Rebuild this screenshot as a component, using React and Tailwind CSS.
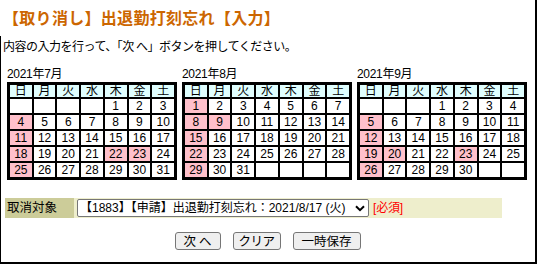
import React from "react";

const heads = ["日", "月", "火", "水", "木", "金", "土"];

function Cal({ label, start, days, pink }) {
  const cells = [];
  for (let i = 0; i < start; i++) cells.push(null);
  for (let d = 1; d <= days; d++) cells.push(d);
  while (cells.length % 7) cells.push(null);
  return (
    <div className="flex flex-col w-[170px]">
      <div className="text-[12px] leading-[15px] h-[15px] tracking-[-0.3px]">{label}</div>
      <div className="grid grid-cols-7 gap-[2px] bg-black border-[3px] border-black">
        {heads.map((h) => (
          <div key={h} className="bg-[#e0ffff] h-[12px] leading-[12px] text-[12px] text-center">
            {h}
          </div>
        ))}
        {cells.map((d, i) => (
          <div
            key={i}
            className={
              d && pink.includes(d)
                ? "bg-[#ffc0cb] h-[14px] leading-[14px] text-[12px] text-center"
                : "bg-white h-[14px] leading-[14px] text-[12px] text-center"
            }
          >
            {d ?? ""}
          </div>
        ))}
      </div>
    </div>
  );
}

export default function App() {
  return (
    <div className="w-[537px] h-[264px] bg-white border-r-2 border-b-2 border-black flex flex-col text-black font-['Liberation_Sans','Noto_Sans_CJK_JP',sans-serif] overflow-hidden">
      <div className="h-[36px] pt-[7px] pl-[3px] text-[16px] leading-[20px] font-bold text-[#cc6600] tracking-[0.3px] font-['Noto_Sans_CJK_JP',sans-serif]">
        【取り消し】出退勤打刻忘れ【入力】
      </div>
      <div className="flex-1 border-l border-black flex flex-col">
        <div className="mt-[3px] pl-[2px] text-[12px] leading-[14px] tracking-[-0.5px] whitespace-pre font-['Noto_Sans_CJK_JP',sans-serif]">
          内容の入力を行って、「次 へ」ボタンを押してください。
        </div>
        <div className="mt-[14px] pl-[6px] flex gap-[5px]">
          <Cal label="2021年7月" start={4} days={31} pink={[4, 11, 18, 25, 22, 23]} />
          <Cal label="2021年8月" start={0} days={31} pink={[1, 8, 15, 22, 29, 9]} />
          <Cal label="2021年9月" start={3} days={30} pink={[5, 12, 19, 26, 20, 23]} />
        </div>
        <div className="mt-[18px] ml-[4px] w-[497px] h-[20px] flex">
          <div className="w-[69px] h-full bg-[#cccc99] pl-[2px] pt-[1px] text-[12.5px] leading-[16px] font-['Noto_Sans_CJK_JP',sans-serif]">
            取消対象
          </div>
          <div className="flex-1 h-full bg-[#eeeecc] flex items-start">
            <div className="ml-[3px] mt-[1px] w-[292px] h-[18px] bg-white border border-[#767676] rounded-[2px] flex items-center pl-[2px] pr-[3px]">
              <span className="flex-1 text-[12px] leading-[16px] whitespace-nowrap overflow-hidden">
                【1883】【申請】出退勤打刻忘れ：2021/8/17 (火)
              </span>
              <svg width="10" height="7" viewBox="0 0 10 7" className="shrink-0">
                <path d="M1 1.2 L5 5.2 L9 1.2" fill="none" stroke="#000" strokeWidth="2" />
              </svg>
            </div>
            <span className="ml-[4px] mt-[2px] text-[12px] leading-[16px] text-[#ff0000] tracking-[-0.2px]">[必須]</span>
          </div>
        </div>
        <div className="mt-[14px] flex justify-center gap-[12px] pr-[1px]">
          <div className="w-[46px] h-[18px] bg-[#efefef] border border-[#767676] rounded-[3px] flex items-center justify-center text-[12.5px] leading-[16px] whitespace-pre font-['Noto_Sans_CJK_JP',sans-serif]">
            次 へ
          </div>
          <div className="w-[48px] h-[18px] bg-[#efefef] border border-[#767676] rounded-[3px] flex items-center justify-center text-[12.5px] leading-[16px] tracking-[-0.5px] font-['Noto_Sans_CJK_JP',sans-serif]">
            クリア
          </div>
          <div className="w-[68px] h-[18px] bg-[#efefef] border border-[#767676] rounded-[3px] flex items-center justify-center text-[12.5px] leading-[16px] font-['Noto_Sans_CJK_JP',sans-serif]">
            一時保存
          </div>
        </div>
      </div>
    </div>
  );
}
